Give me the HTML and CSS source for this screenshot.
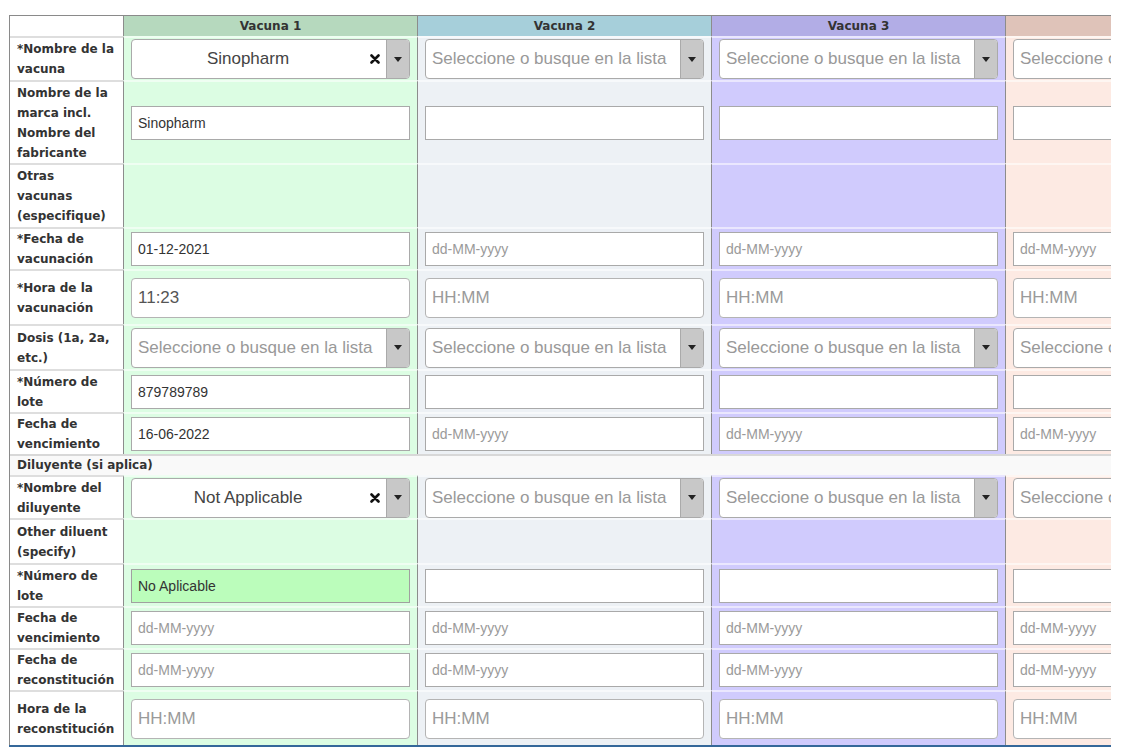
FILE: index.html
```html
<!DOCTYPE html>
<html lang="es">
<head>
<meta charset="utf-8">
<title>Vacunas</title>
<link rel="stylesheet" href="styles.css">
</head>
<body>
<div class="sheet">
<table class="grid">
  <colgroup>
    <col class="c-label"><col class="c-vac"><col class="c-vac"><col class="c-vac"><col class="c-vac">
  </colgroup>
  <thead>
    <tr class="head">
      <th class="lab"></th>
      <th class="v1">Vacuna 1</th>
      <th class="v2">Vacuna 2</th>
      <th class="v3">Vacuna 3</th>
      <th class="v4"></th>
    </tr>
  </thead>
  <tbody>
    <tr class="h44">
      <td class="lab">*Nombre de la<br>vacuna</td>
      <td class="v1"><div class="s2 is-set"><span class="s2-text">Sinopharm</span><span class="s2-clear"><svg width="10" height="10" viewBox="0 0 10 10"><path d="M1.5 1.5L8.5 8.5M8.5 1.5L1.5 8.5" stroke="#111" stroke-width="2.6" stroke-linecap="round"/></svg></span><span class="s2-arrow"></span></div></td>
      <td class="v2"><div class="s2"><span class="s2-text">Seleccione o busque en la lista</span><span class="s2-arrow"></span></div></td>
      <td class="v3"><div class="s2"><span class="s2-text">Seleccione o busque en la lista</span><span class="s2-arrow"></span></div></td>
      <td class="v4"><div class="s2"><span class="s2-text">Seleccione o busque en la lista</span><span class="s2-arrow"></span></div></td>
    </tr>
    <tr class="h83">
      <td class="lab">Nombre de la<br>marca incl.<br>Nombre del<br>fabricante</td>
      <td class="v1"><input class="fld" type="text" value="Sinopharm"></td>
      <td class="v2"><input class="fld" type="text"></td>
      <td class="v3"><input class="fld" type="text"></td>
      <td class="v4"><input class="fld" type="text"></td>
    </tr>
    <tr class="h64">
      <td class="lab">Otras<br>vacunas<br>(especifique)</td>
      <td class="v1"></td>
      <td class="v2"></td>
      <td class="v3"></td>
      <td class="v4"></td>
    </tr>
    <tr class="h41">
      <td class="lab">*Fecha de<br>vacunación</td>
      <td class="v1"><input class="fld" type="text" value="01-12-2021" placeholder="dd-MM-yyyy"></td>
      <td class="v2"><input class="fld" type="text" placeholder="dd-MM-yyyy"></td>
      <td class="v3"><input class="fld" type="text" placeholder="dd-MM-yyyy"></td>
      <td class="v4"><input class="fld" type="text" placeholder="dd-MM-yyyy"></td>
    </tr>
    <tr class="h55">
      <td class="lab">*Hora de la<br>vacunación</td>
      <td class="v1"><input class="fld time" type="text" value="11:23" placeholder="HH:MM"></td>
      <td class="v2"><input class="fld time" type="text" placeholder="HH:MM"></td>
      <td class="v3"><input class="fld time" type="text" placeholder="HH:MM"></td>
      <td class="v4"><input class="fld time" type="text" placeholder="HH:MM"></td>
    </tr>
    <tr class="h45">
      <td class="lab">Dosis (1a, 2a,<br>etc.)</td>
      <td class="v1"><div class="s2"><span class="s2-text">Seleccione o busque en la lista</span><span class="s2-arrow"></span></div></td>
      <td class="v2"><div class="s2"><span class="s2-text">Seleccione o busque en la lista</span><span class="s2-arrow"></span></div></td>
      <td class="v3"><div class="s2"><span class="s2-text">Seleccione o busque en la lista</span><span class="s2-arrow"></span></div></td>
      <td class="v4"><div class="s2"><span class="s2-text">Seleccione o busque en la lista</span><span class="s2-arrow"></span></div></td>
    </tr>
    <tr class="h43">
      <td class="lab">*Número de<br>lote</td>
      <td class="v1"><input class="fld" type="text" value="879789789"></td>
      <td class="v2"><input class="fld" type="text"></td>
      <td class="v3"><input class="fld" type="text"></td>
      <td class="v4"><input class="fld" type="text"></td>
    </tr>
    <tr class="h42">
      <td class="lab">Fecha de<br>vencimiento</td>
      <td class="v1"><input class="fld" type="text" value="16-06-2022" placeholder="dd-MM-yyyy"></td>
      <td class="v2"><input class="fld" type="text" placeholder="dd-MM-yyyy"></td>
      <td class="v3"><input class="fld" type="text" placeholder="dd-MM-yyyy"></td>
      <td class="v4"><input class="fld" type="text" placeholder="dd-MM-yyyy"></td>
    </tr>
    <tr class="h21 section">
      <td class="lab sec" colspan="5">Diluyente (si aplica)</td>
    </tr>
    <tr class="h43">
      <td class="lab">*Nombre del<br>diluyente</td>
      <td class="v1"><div class="s2 is-set"><span class="s2-text">Not Applicable</span><span class="s2-clear"><svg width="10" height="10" viewBox="0 0 10 10"><path d="M1.5 1.5L8.5 8.5M8.5 1.5L1.5 8.5" stroke="#111" stroke-width="2.6" stroke-linecap="round"/></svg></span><span class="s2-arrow"></span></div></td>
      <td class="v2"><div class="s2"><span class="s2-text">Seleccione o busque en la lista</span><span class="s2-arrow"></span></div></td>
      <td class="v3"><div class="s2"><span class="s2-text">Seleccione o busque en la lista</span><span class="s2-arrow"></span></div></td>
      <td class="v4"><div class="s2"><span class="s2-text">Seleccione o busque en la lista</span><span class="s2-arrow"></span></div></td>
    </tr>
    <tr class="h45">
      <td class="lab">Other diluent<br>(specify)</td>
      <td class="v1"></td>
      <td class="v2"></td>
      <td class="v3"></td>
      <td class="v4"></td>
    </tr>
    <tr class="h43">
      <td class="lab">*Número de<br>lote</td>
      <td class="v1"><input class="fld na" type="text" value="No Aplicable"></td>
      <td class="v2"><input class="fld" type="text"></td>
      <td class="v3"><input class="fld" type="text"></td>
      <td class="v4"><input class="fld" type="text"></td>
    </tr>
    <tr class="h42">
      <td class="lab">Fecha de<br>vencimiento</td>
      <td class="v1"><input class="fld" type="text" placeholder="dd-MM-yyyy"></td>
      <td class="v2"><input class="fld" type="text" placeholder="dd-MM-yyyy"></td>
      <td class="v3"><input class="fld" type="text" placeholder="dd-MM-yyyy"></td>
      <td class="v4"><input class="fld" type="text" placeholder="dd-MM-yyyy"></td>
    </tr>
    <tr class="h41">
      <td class="lab">Fecha de<br>reconstitución</td>
      <td class="v1"><input class="fld" type="text" placeholder="dd-MM-yyyy"></td>
      <td class="v2"><input class="fld" type="text" placeholder="dd-MM-yyyy"></td>
      <td class="v3"><input class="fld" type="text" placeholder="dd-MM-yyyy"></td>
      <td class="v4"><input class="fld" type="text" placeholder="dd-MM-yyyy"></td>
    </tr>
    <tr class="h55">
      <td class="lab">Hora de la<br>reconstitución</td>
      <td class="v1"><input class="fld time" type="text" placeholder="HH:MM"></td>
      <td class="v2"><input class="fld time" type="text" placeholder="HH:MM"></td>
      <td class="v3"><input class="fld time" type="text" placeholder="HH:MM"></td>
      <td class="v4"><input class="fld time" type="text" placeholder="HH:MM"></td>
    </tr>
  </tbody>
</table>
</div>
</body>
</html>
```

FILE: styles.css
```css
html, body {
  margin: 0;
  padding: 0;
  background: #fff;
}

body {
  font-family: "Liberation Sans", Arial, sans-serif;
  color: #333;
}

.sheet {
  margin: 15px 0 0 9px;
  width: 1102px;
  overflow: hidden;
  border-bottom: 2px solid #35689a;
}

.grid {
  table-layout: fixed;
  width: 1290px;
  border-collapse: separate;
  border-spacing: 0;
  border-left: 1px solid #8a8a8a;
  border-top: 1px solid #8a8a8a;
}

.c-label { width: 113px; }
.c-vac { width: 294px; }

.grid th,
.grid td {
  padding: 0 7px;
  vertical-align: middle;
}

.grid th {
  height: 20px;
  font: bold 12px/20px "DejaVu Sans", Verdana, sans-serif;
  color: #333;
  text-align: center;
}

.grid td {
  border-top: 2px solid rgba(255, 255, 255, 0.55);
}

.grid td.lab {
  border-top-color: #dedede;
  background: #fff;
  font: bold 12px/20px "DejaVu Sans", Verdana, sans-serif;
  color: #333;
  white-space: nowrap;
  padding: 0 2px 0 7px;
  text-align: left;
}

.grid th.lab { background: #fff; }

.grid .v1, .grid .v2, .grid .v3, .grid .v4 {
  border-left: 1px solid #8c8c8c;
}

th.v1 { background: #b6d9be; }
th.v2 { background: #a6cfda; }
th.v3 { background: #b2ade6; }
th.v4 { background: #dfc3b9; }

td.v1 { background: #dcfde3; }
td.v2 { background: #edf1f5; }
td.v3 { background: #d0cbfd; }
td.v4 { background: #fdeae3; }

.grid td.sec {
  background: #f9f9f9;
  line-height: 19px;
  border-top-color: #d8d8d8;
}

.head { height: 20px; }
.h21 { height: 21px; }
.h41 { height: 41px; }
.h42 { height: 42px; }
.h43 { height: 43px; }
.h44 { height: 44px; }
.h45 { height: 45px; }
.h55 { height: 55px; }
.h64 { height: 64px; }
.h83 { height: 83px; }

/* plain text field */
.fld {
  display: block;
  box-sizing: border-box;
  width: 100%;
  height: 34px;
  margin: 0;
  padding: 0 6px;
  border: 1px solid #a9a9a9;
  border-radius: 0;
  background: #fff;
  font: 14px "Liberation Sans", Arial, sans-serif;
  color: #333;
  outline: none;
}

.fld::placeholder { color: #9a9a9a; opacity: 1; }

.fld.na { background: #bbfdbb; border-color: #a0a0a0; }

.fld.time {
  height: 40px;
  border-radius: 4px;
  border-color: #b4b4b4;
  font-size: 17px;
  color: #555;
}

/* select2-like combobox */
.s2 {
  display: flex;
  box-sizing: border-box;
  height: 40px;
  border: 1px solid #aaa;
  border-radius: 4px;
  background: #fff;
  overflow: hidden;
  font: 17px/38px "Liberation Sans", Arial, sans-serif;
}

.s2-text {
  flex: 1;
  min-width: 0;
  padding: 0 6px;
  white-space: nowrap;
  overflow: hidden;
  color: #999;
}

.s2.is-set .s2-text {
  text-align: center;
  color: #444;
}

.s2-clear {
  width: 22px;
  display: flex;
  align-items: center;
  justify-content: center;
}

.s2-arrow {
  width: 22px;
  flex: none;
  background: #c8c8c8;
  border-left: 1px solid #aaa;
  display: flex;
  align-items: center;
  justify-content: center;
}

.s2-arrow::after {
  content: "";
  width: 0;
  height: 0;
  border-top: 5px solid #222;
  border-left: 4px solid transparent;
  border-right: 4px solid transparent;
}
```
